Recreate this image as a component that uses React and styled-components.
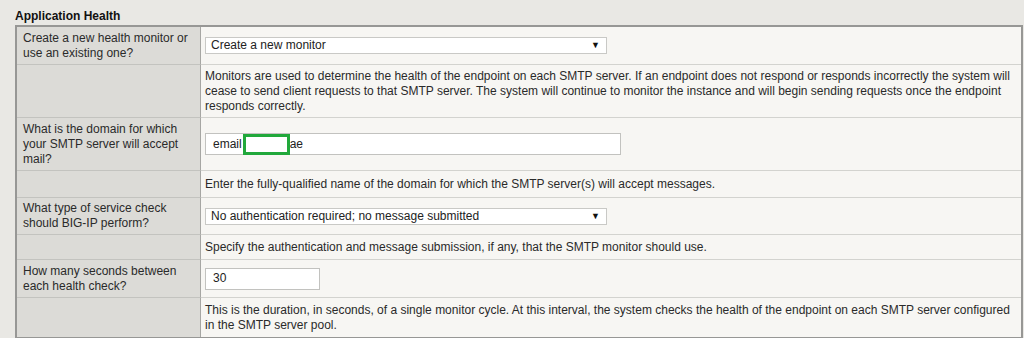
import React from "react";
import styled, { createGlobalStyle } from "styled-components";

const Global = createGlobalStyle`
  html, body { margin: 0; padding: 0; background: #e9e8e4; }
  body { font-family: "Liberation Sans", Arial, sans-serif; font-size: 12px; color: #222; }
`;

const Page = styled.div`
  padding: 9px 1px 0 15px;
  width: 1008px;
`;

const Title = styled.div`
  font-weight: bold;
  font-size: 12px;
  line-height: 15px;
  height: 16px;
  color: #111;
`;

const Table = styled.div`
  border: 2px solid #979795;
  display: grid;
  grid-template-columns: 184px 1fr;
`;

const Label = styled.div`
  background: #dcdbd7;
  border-right: 1px solid #a6a6a3;
  border-bottom: ${p => (p.$last ? "none" : "1px solid #c3c3bf")};
  height: ${p => p.$h}px;
  box-sizing: border-box;
  padding: 0 6px;
  display: flex;
  align-items: center;
  line-height: 15px;
  color: #2a2a2a;
`;

const Cell = styled.div`
  background: #f7f6f3;
  border-bottom: ${p => (p.$last ? "none" : "1px solid #d3d3cf")};
  height: ${p => p.$h}px;
  box-sizing: border-box;
  padding: 0 6px 0 4px;
  display: flex;
  align-items: center;
  line-height: 15px;
  color: #2a2a2a;
`;

const Select = styled.div`
  width: 402px;
  height: 17px;
  box-sizing: border-box;
  background: #fff;
  border: 1px solid #c9c9c6;
  display: flex;
  align-items: center;
  justify-content: space-between;
  padding: 0 6px 0 5px;
  line-height: 15px;
  color: #222;
`;

const Arrow = styled.span`
  font-size: 9px;
  color: #111;
`;

const TextBox = styled.div`
  width: ${p => p.$w}px;
  height: 22px;
  box-sizing: border-box;
  background: #fff;
  border: 1px solid #c2c2bf;
  display: flex;
  align-items: center;
  padding: 0 7px;
  color: #222;
`;

const Redact = styled.span`
  display: inline-block;
  width: 41px;
  height: 15px;
  border: 3px solid #21a83b;
  background: #fff;
  margin: 1px 0 0 1px;
`;

const rows = [
  {
    label: "Create a new health monitor or use an existing one?",
    h: 38,
    content: (
      <Select>
        <span>Create a new monitor</span>
        <Arrow>▼</Arrow>
      </Select>
    ),
  },
  {
    label: "",
    h: 53,
    content: (
      <span>
        Monitors are used to determine the health of the endpoint on each SMTP server. If an endpoint does not respond or responds incorrectly the system will cease to send client requests to that SMTP server. The system will continue to monitor the instance and will begin sending requests once the endpoint responds correctly.
      </span>
    ),
  },
  {
    label: "What is the domain for which your SMTP server will accept mail?",
    h: 53,
    content: (
      <TextBox $w={416}>
        email<Redact />ae
      </TextBox>
    ),
  },
  {
    label: "",
    h: 27,
    content: <span>Enter the fully-qualified name of the domain for which the SMTP server(s) will accept messages.</span>,
  },
  {
    label: "What type of service check should BIG-IP perform?",
    h: 37,
    content: (
      <Select>
        <span>No authentication required; no message submitted</span>
        <Arrow>▼</Arrow>
      </Select>
    ),
  },
  {
    label: "",
    h: 25,
    content: <span>Specify the authentication and message submission, if any, that the SMTP monitor should use.</span>,
  },
  {
    label: "How many seconds between each health check?",
    h: 38,
    content: <TextBox $w={115}>30</TextBox>,
  },
  {
    label: "",
    h: 39,
    content: (
      <span>
        This is the duration, in seconds, of a single monitor cycle. At this interval, the system checks the health of the endpoint on each SMTP server configured in the SMTP server pool.
      </span>
    ),
  },
];

export default function App() {
  return (
    <>
      <Global />
      <Page>
        <Title>Application Health</Title>
        <Table>
          {rows.map((r, i) => {
            const last = i === rows.length - 1;
            return (
              <React.Fragment key={i}>
                <Label $h={r.h} $last={last}>{r.label}</Label>
                <Cell $h={r.h} $last={last}>{r.content}</Cell>
              </React.Fragment>
            );
          })}
        </Table>
      </Page>
    </>
  );
}
